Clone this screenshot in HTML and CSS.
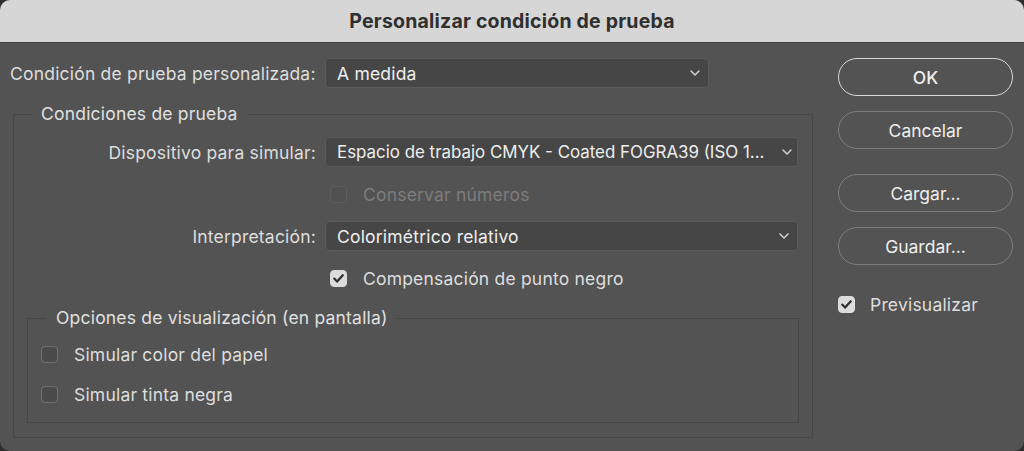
FILE: index.html
```html
<!DOCTYPE html>
<html lang="es">
<head>
<meta charset="utf-8">
<title>Personalizar condición de prueba</title>
<link rel="stylesheet" href="styles.css">
</head>
<body>
<div class="dialog">
  <header class="titlebar">Personalizar condición de prueba</header>
  <div class="dialog-body">
    <div class="main">
      <div class="row-top">
        <span class="label-top">Condición de prueba personalizada:</span>
        <div class="select select-top">
          <span class="select-value">A medida</span>
          <svg class="chevron" width="10" height="6" viewBox="0 0 10 6"><path d="M1 1 L5 5 L9 1"/></svg>
        </div>
      </div>

      <fieldset class="group group-outer">
        <legend class="group-title group-title-outer">Condiciones de prueba</legend>
        <div class="form-grid">
          <span class="field-label">Dispositivo para simular:</span>
          <div class="select select-long">
            <span class="select-value">Espacio de trabajo CMYK - Coated FOGRA39 (ISO 1...</span>
            <svg class="chevron chevron-tight" width="10" height="6" viewBox="0 0 10 6"><path d="M1 1 L5 5 L9 1"/></svg>
          </div>

          <span class="field-label"></span>
          <div class="check check-inset is-disabled">
            <span class="box"></span>
            <span class="check-text">Conservar números</span>
          </div>

          <span class="field-label">Interpretación:</span>
          <div class="select">
            <span class="select-value">Colorimétrico relativo</span>
            <svg class="chevron" width="10" height="6" viewBox="0 0 10 6"><path d="M1 1 L5 5 L9 1"/></svg>
          </div>

          <span class="field-label"></span>
          <div class="check check-inset">
            <span class="box is-checked">
              <svg width="17" height="17" viewBox="0 0 17 17"><path d="M4.2 8.6 L7.1 11.6 L12.8 5.2"/></svg>
            </span>
            <span class="check-text">Compensación de punto negro</span>
          </div>
        </div>

        <fieldset class="group group-inner">
          <legend class="group-title group-title-inner">Opciones de visualización (en pantalla)</legend>
          <div class="check-list">
            <div class="check">
              <span class="box"></span>
              <span class="check-text">Simular color del papel</span>
            </div>
            <div class="check">
              <span class="box"></span>
              <span class="check-text">Simular tinta negra</span>
            </div>
          </div>
        </fieldset>
      </fieldset>
    </div>

    <aside class="side">
      <button class="btn btn-default">OK</button>
      <button class="btn btn-cancel">Cancelar</button>
      <button class="btn btn-load">Cargar...</button>
      <button class="btn btn-save">Guardar...</button>
      <div class="check check-preview">
        <span class="box is-checked">
          <svg width="17" height="17" viewBox="0 0 17 17"><path d="M4.2 8.6 L7.1 11.6 L12.8 5.2"/></svg>
        </span>
        <span class="check-text">Previsualizar</span>
      </div>
    </aside>
  </div>
</div>
</body>
</html>
```

FILE: styles.css
```css
* {
  box-sizing: border-box;
}

html, body {
  margin: 0;
  padding: 0;
  background: #2e2e2e;
}

body {
  font-family: Inter, "Noto Sans", "Liberation Sans", sans-serif;
  font-size: 17.5px;
  letter-spacing: 0.2px;
  color: #dedede;
}

.dialog {
  width: 1024px;
  height: 451px;
  background: #535353;
  border-radius: 10px;
  overflow: hidden;
}

/* Title bar */
.titlebar {
  height: 43px;
  background: #d6d6d6;
  border-bottom: 1px solid #3f3f3f;
  color: #2f2f2f;
  font-weight: 700;
  font-size: 19.5px;
  display: flex;
  align-items: center;
  justify-content: center;
  padding-bottom: 1px;
}

.dialog-body {
  display: flex;
  gap: 25px;
}

/* Left column */
.main {
  width: 813px;
  padding: 15px 0 0 10px;
}

.row-top {
  display: flex;
  align-items: center;
  gap: 9px;
  height: 30px;
}

.label-top {
  width: 306px;
  white-space: nowrap;
}

.select {
  height: 30px;
  background: #464646;
  border: 1px solid #5b5b5b;
  border-radius: 4px;
  display: flex;
  align-items: center;
  justify-content: space-between;
  padding: 0 8px 0 11px;
  color: #eeeeee;
  white-space: nowrap;
}

.select-top {
  width: 384px;
}

.select-value {
  overflow: hidden;
}

.select-long {
  padding-right: 5px;
}

.select-long .select-value {
  font-size: 16.9px;
  letter-spacing: 0;
}

.chevron {
  flex: none;
}

.chevron path {
  fill: none;
  stroke: #d2d2d2;
  stroke-width: 1.5;
  stroke-linecap: round;
  stroke-linejoin: round;
}

.chevron-tight {
  margin-left: 3px;
}

/* Group boxes */
.group {
  margin: 0;
  padding: 0;
  border: 1px solid #464646;
  min-inline-size: 0;
}

.group-title {
  line-height: 20px;
  height: 20px;
  color: #e0e0e0;
  white-space: nowrap;
}

.group-outer {
  width: 800px;
  margin: 16px 0 0 3px;
  padding: 0 0 14px 0;
}

.group-title-outer {
  margin-left: 18px;
  padding: 0 9px;
}

.form-grid {
  display: grid;
  grid-template-columns: 302px 473px;
  grid-template-rows: 30px 20px 30px 20px;
  column-gap: 9px;
  row-gap: 17px;
  padding-top: 13px;
}

.field-label {
  text-align: right;
  align-self: center;
  white-space: nowrap;
}

.group-inner {
  width: 772px;
  margin: 20px 0 0 13px;
  padding: 16px 0 18px 13px;
}

/* legend sits after the fieldset's 13px left padding */
.group-title-inner {
  margin-left: 5px;
  padding: 0 9px 0 10px;
}

.check-list {
  display: flex;
  flex-direction: column;
  gap: 20px;
}

/* Checkboxes */
.check {
  display: flex;
  align-items: center;
  gap: 16px;
  height: 20px;
  white-space: nowrap;
}

.check-inset {
  padding-left: 5px;
}

.box {
  width: 17px;
  height: 17px;
  flex: none;
  border-radius: 4px;
  border: 1px solid #707070;
  background: #4b4b4b;
  display: block;
}

.box svg {
  display: block;
  margin: -1px;
}

.box.is-checked {
  background: #dcdcdc;
  border-color: #dcdcdc;
}

.box.is-checked path {
  fill: none;
  stroke: #2e2e2e;
  stroke-width: 2.2;
  stroke-linecap: round;
  stroke-linejoin: round;
}

.is-disabled .box {
  border-color: #5d5d5d;
  background: #515151;
}

.is-disabled .check-text {
  color: #7c7c7c;
}

/* Right column */
.side {
  width: 175px;
  padding-top: 15px;
  display: flex;
  flex-direction: column;
}

.btn {
  height: 38px;
  border-radius: 19px;
  background: transparent;
  border: 1.5px solid #7e7e7e;
  color: #eeeeee;
  font: inherit;
  padding: 0;
}

.btn-default {
  border-color: #d8d8d8;
  font-weight: 500;
}

.btn-cancel {
  margin-top: 15px;
}

.btn-load {
  margin-top: 25px;
}

.btn-save {
  margin-top: 15px;
}

.check-preview {
  margin-top: 29px;
  gap: 15px;
}
```
